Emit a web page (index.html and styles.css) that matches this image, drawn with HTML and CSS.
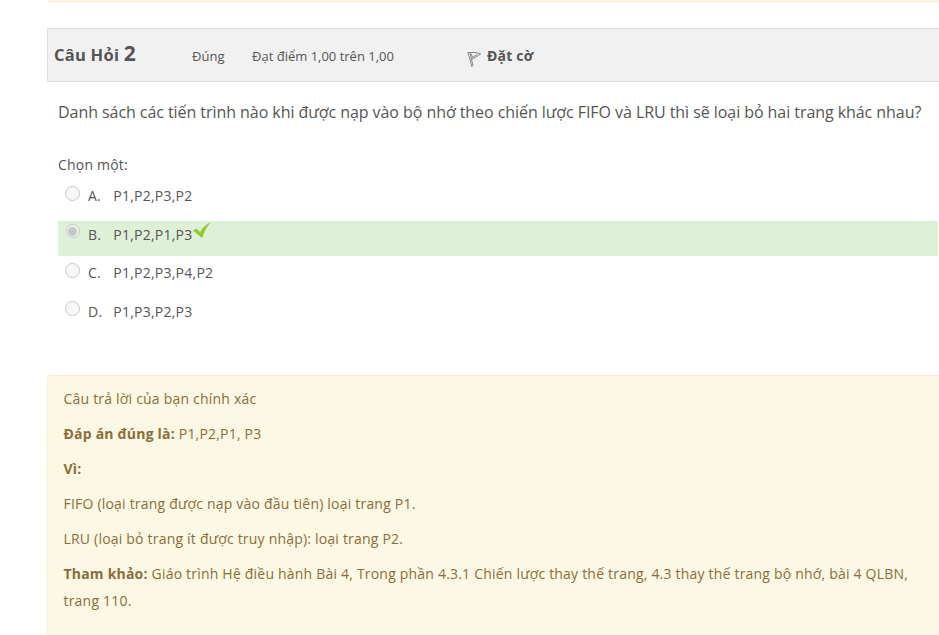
FILE: index.html
```html
<!DOCTYPE html>
<html lang="vi">
<head>
<meta charset="utf-8">
<title>Câu Hỏi 2</title>
<link rel="stylesheet" href="styles.css">
</head>
<body>
<main class="quiz">
  <div class="previous"></div>
  <header class="info">
    <h3 class="number">Câu Hỏi <span class="no">2</span></h3>
    <div class="state">Đúng</div>
    <div class="grade">Đạt điểm 1,00 trên 1,00</div>
    <div class="flag">
      <svg width="16" height="17" viewBox="0 0 16 17" fill="none" stroke="#858585" stroke-width="1"><path d="M1 1.5 5 16M3 1.8 6 15M.5 1.5H8L13.7 3 5 8.3M4.2 2.8 5.5 6.5 10 3.5"/></svg>
      <span>Đặt cờ</span>
    </div>
  </header>
  <section class="question">
    <p class="text">Danh sách các tiến trình nào khi được nạp vào bộ nhớ theo chiến lược FIFO và LRU thì sẽ loại bỏ hai trang khác nhau?</p>
    <div class="prompt">Chọn một:</div>
    <div class="answers">
      <div class="answer"><i class="radio"></i><span class="letter">A.</span><span>P1,P2,P3,P2</span></div>
      <div class="answer correct"><i class="radio checked"></i><span class="letter">B.</span><span>P1,P2,P1,P3</span><svg class="tick" width="18" height="17" viewBox="0 0 18 17"><path fill="#93cb2b" d="M0 8.8 3.5 6.5 7 10Q10.5 4 17.5 0Q12 7 9 16Z"/></svg></div>
      <div class="answer"><i class="radio"></i><span class="letter">C.</span><span>P1,P2,P3,P4,P2</span></div>
      <div class="answer"><i class="radio"></i><span class="letter">D.</span><span>P1,P3,P2,P3</span></div>
    </div>
  </section>
  <section class="feedback">
    <p>Câu trả lời của bạn chính xác</p>
    <p><b>Đáp án đúng là:</b> P1,P2,P1, P3</p>
    <p><b>Vì:</b></p>
    <p>FIFO (loại trang được nạp vào đầu tiên) loại trang P1.</p>
    <p>LRU (loại bỏ trang ít được truy nhập): loại trang P2.</p>
    <p><b>Tham khảo:</b> Giáo trình Hệ điều hành Bài 4, Trong phần 4.3.1 Chiến lược thay thế trang, 4.3 thay thế trang bộ nhớ, bài 4 QLBN,<br>trang 110.</p>
  </section>
</main>
</body>
</html>
```
FILE: styles.css
```css
* { box-sizing: border-box; }
body { margin: 0; background: #fff; color: #555; font: 14px/27px "Open Sans", sans-serif; overflow: hidden; }
.quiz { width: 939px; height: 635px; padding-left: 47px; overflow: hidden; }
.previous { height: 2px; background: #fcf8e3; border-bottom: 1px solid #fbeed5; border-bottom-left-radius: 4px; margin-bottom: 26px; }
.info { height: 54px; display: flex; align-items: center; background: #f1f1f1; border: 1px solid #dcdcdc; border-right: 0; border-radius: 2px 0 0 2px; padding-left: 6px; font-size: 13px; white-space: nowrap; }
.number { margin: -3px 0 0; width: 138px; font-size: 16.5px; font-weight: 700; letter-spacing: .25px; }
.no { font-size: 21px; }
.state { width: 60px; padding-top: 3px; }
.grade { width: 215px; padding-top: 3px; }
.flag { display: flex; align-items: center; gap: 4px; font-size: 14px; font-weight: 700; letter-spacing: .2px; padding-top: 1px; }
.flag svg { margin-top: 8px; }
.question { padding-left: 11px; height: 293px; }
.text { margin: 0; padding-top: 17px; font-size: 16px; letter-spacing: -.06px; white-space: nowrap; }
.prompt { margin-top: 25px; letter-spacing: .2px; }
.answers { margin-top: 4px; margin-right: 1px; }
.answer { height: 35px; margin-bottom: 3.5px; display: flex; align-items: flex-start; padding-left: 7px; letter-spacing: .24px; }
.correct { background: #dff0d8; }
.radio { width: 15px; height: 15px; margin: 3.5px 8px 0 0; border: 1px solid #c8c8c8; border-radius: 50%; background: #f8f8f8; display: flex; align-items: center; justify-content: center; }
.checked { width: 14px; height: 14px; margin-left: .5px; margin-right: 8.5px; background: #eef5eb; }
.checked::after { content: ""; width: 9px; height: 9px; border-radius: 50%; background: #c3c9c0; }
.letter { width: 25.3px; }
.tick { margin-top: 1px; }
.feedback { height: 270px; background: #fcf8e3; border: 1px solid #fbeed5; border-right: 0; border-radius: 4px 0 0 0; padding: 9px 0 0 15.5px; color: #8a6d3b; letter-spacing: .203px; white-space: nowrap; }
.feedback p { margin: 0 0 8px; }
```
